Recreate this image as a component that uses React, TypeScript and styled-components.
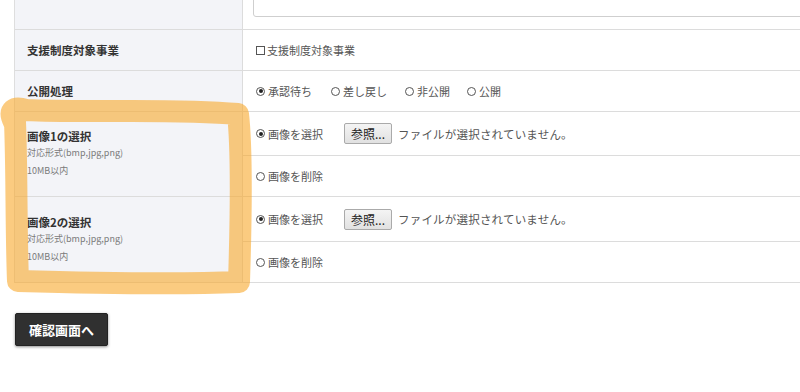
import React from "react";
import styled, { createGlobalStyle } from "styled-components";

const GlobalStyle = createGlobalStyle`
  html, body { margin: 0; padding: 0; background: #fff; overflow: hidden; }
  body { font-family: "Noto Sans CJK JP", "Noto Sans", sans-serif; }
`;

const Page = styled.div`
  position: relative;
  width: 800px;
  height: 392px;
  overflow: hidden;
`;

const Table = styled.div`
  margin-top: -53px;
  margin-left: 14px;
  width: 1000px;
  border-left: 1px solid #dedede;
`;

const Row = styled.div<{ $h?: number }>`
  display: grid;
  grid-template-columns: 228px 1fr;
  border-bottom: 1px solid #dcdcdc;
  min-height: ${(p) => (p.$h ? `${p.$h}px` : "auto")};
`;

const Label = styled.div`
  box-sizing: border-box;
  background: #f3f4f8;
  border-right: 1px solid #dcdcdc;
  padding: 0 12px;
  display: flex;
  flex-direction: column;
  justify-content: center;
`;

const LabelTitle = styled.div`
  font-size: 11.5px;
  font-weight: 700;
  color: #333;
  line-height: 16px;
`;

const LabelNote = styled.div`
  font-size: 9px;
  color: #7a7a7a;
  line-height: 18px;
  &:first-of-type { margin-top: 1px; }
`;

const Value = styled.div`
  display: flex;
  align-items: center;
  padding: 0 13px;
  font-size: 11px;
  color: #555;
`;

const TextBoxCell = styled.div`
  padding: 10px 0 12px 10px;
`;

const TextBox = styled.div`
  height: 60px;
  box-sizing: border-box;
  border: 1px solid #cfcfcf;
  border-radius: 3px;
  background: #fff;
`;

const SubRows = styled.div`
  display: flex;
  flex-direction: column;
`;

const SubRow = styled(Value)<{ $h: number; $last?: boolean }>`
  height: ${(p) => p.$h}px;
  box-sizing: border-box;
  border-bottom: ${(p) => (p.$last ? "none" : "1px solid #dcdcdc")};
`;

const Option = styled.span<{ $gap?: number }>`
  display: inline-flex;
  align-items: center;
  margin-right: ${(p) => p.$gap ?? 0}px;
  white-space: nowrap;
`;

const Radio = styled.span<{ $on?: boolean }>`
  box-sizing: border-box;
  width: 9px;
  height: 9px;
  border: 1px solid #555;
  border-radius: 50%;
  margin-right: 3px;
  display: inline-flex;
  align-items: center;
  justify-content: center;
  &::after {
    content: "";
    width: 4px;
    height: 4px;
    border-radius: 50%;
    background: ${(p) => (p.$on ? "#222" : "transparent")};
  }
`;

const Check = styled.span`
  box-sizing: border-box;
  width: 9px;
  height: 9px;
  border: 1px solid #555;
  margin-right: 2px;
`;

const Browse = styled.span`
  box-sizing: border-box;
  height: 21px;
  width: 48px;
  display: inline-flex;
  align-items: center;
  justify-content: center;
  border: 1px solid #aaa;
  border-radius: 2px;
  background: linear-gradient(#f4f4f4, #e1e1e1);
  color: #222;
  font-size: 12px;
  margin: 0 6px 0 21px;
`;

const FileNote = styled.span`
  color: #555;
  font-size: 11.5px;
  letter-spacing: 0.2px;
`;

const Submit = styled.button`
  display: block;
  margin: 30px 0 0 15px;
  width: 93px;
  height: 33px;
  border: 1px solid #222;
  border-radius: 2px;
  background: #303030;
  color: #fff;
  font-family: "Noto Sans CJK JP", sans-serif;
  font-weight: 700;
  font-size: 13px;
  box-shadow: 0 1px 3px rgba(0, 0, 0, 0.45);
  padding: 0;
`;

const Marker = styled.svg`
  position: absolute;
  left: 0;
  top: 0;
  pointer-events: none;
`;

const statuses = [
  { t: "承認待ち", on: true, gap: 19 },
  { t: "差し戻し", on: false, gap: 18 },
  { t: "非公開", on: false, gap: 17 },
  { t: "公開", on: false, gap: 0 },
];

const ImageRow = ({ n, h1 }: { n: number; h1: number }) => (
  <Row>
    <Label>
      <LabelTitle>画像{n}の選択</LabelTitle>
      <LabelNote>対応形式(bmp,jpg,png)</LabelNote>
      <LabelNote>10MB以内</LabelNote>
    </Label>
    <SubRows>
      <SubRow $h={h1}>
        <Option>
          <Radio $on />
          画像を選択
        </Option>
        <Browse>参照...</Browse>
        <FileNote>ファイルが選択されていません。</FileNote>
      </SubRow>
      <SubRow $h={40} $last>
        <Option>
          <Radio />
          画像を削除
        </Option>
      </SubRow>
    </SubRows>
  </Row>
);

export default function App() {
  return (
    <Page>
      <GlobalStyle />
      <Table>
        <Row>
          <Label />
          <TextBoxCell>
            <TextBox />
          </TextBoxCell>
        </Row>
        <Row $h={40}>
          <Label>
            <LabelTitle>支援制度対象事業</LabelTitle>
          </Label>
          <Value>
            <Option>
              <Check />
              支援制度対象事業
            </Option>
          </Value>
        </Row>
        <Row $h={40}>
          <Label>
            <LabelTitle>公開処理</LabelTitle>
          </Label>
          <Value>
            {statuses.map((s) => (
              <Option key={s.t} $gap={s.gap}>
                <Radio $on={s.on} />
                {s.t}
              </Option>
            ))}
          </Value>
        </Row>
        <ImageRow n={1} h1={44} />
        <ImageRow n={2} h1={45} />
      </Table>
      <Submit>確認画面へ</Submit>
      <Marker width="800" height="392" viewBox="0 0 800 392">
        <path
          d="M 14 122 C 8 110, 14 106, 26 110 C 90 113, 170 108, 238 114 C 242 150, 241 220, 239 282 C 170 285, 90 283, 18 281 C 16 230, 17 170, 15 122"
          fill="none"
          stroke="rgba(248,168,43,0.6)"
          strokeWidth="22"
          strokeLinejoin="round"
          strokeLinecap="round"
        />
      </Marker>
    </Page>
  );
}
